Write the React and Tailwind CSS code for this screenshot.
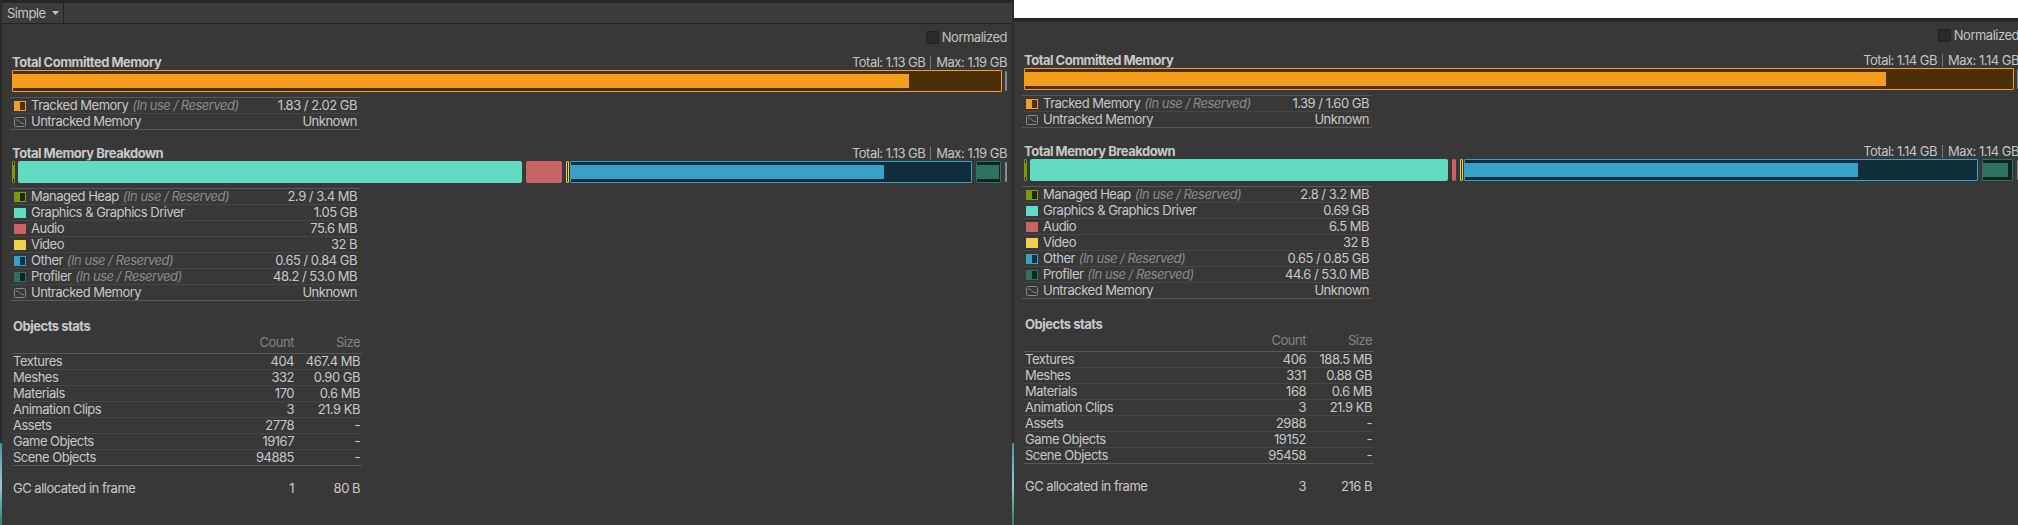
import React from 'react';

const LEFT = {
    total: '1.13 GB',
    max: '1.19 GB',
    trackedFill: 896,
    tracked: '1.83 / 2.02 GB',
    segments: [
        { kind: 'split', gap: 0, w: 3, fill: 1, color: '#7d9b06', dark: '#1e2600' },
        { kind: 'solid', gap: 3, w: 504, color: '#62dbc3' },
        { kind: 'solid', gap: 4, w: 36, color: '#c96464' },
        { kind: 'split', gap: 4, w: 3, fill: 0, color: '#f0d24a', dark: '#3a3110' },
        { kind: 'split', gap: 1, w: 402, fill: 313, color: '#37a1c8', dark: '#112f3b' },
        { kind: 'split', gap: 4, w: 25, fill: 22, color: '#2f7163', dark: '#0e2621' },
    ],
    breakdown: ['2.9 / 3.4 MB', '1.05 GB', '75.6 MB', '32 B', '0.65 / 0.84 GB', '48.2 / 53.0 MB', 'Unknown'],
    objects: [
        ['Textures', '404', '467.4 MB'],
        ['Meshes', '332', '0.90 GB'],
        ['Materials', '170', '0.6 MB'],
        ['Animation Clips', '3', '21.9 KB'],
        ['Assets', '2778', '-'],
        ['Game Objects', '19167', '-'],
        ['Scene Objects', '94885', '-'],
    ],
    gc: ['1', '80 B'],
};

const RIGHT = {
    total: '1.14 GB',
    max: '1.14 GB',
    trackedFill: 861,
    tracked: '1.39 / 1.60 GB',
    segments: [
        { kind: 'split', gap: 0, w: 3, fill: 1, color: '#7d9b06', dark: '#1e2600' },
        { kind: 'solid', gap: 3, w: 418, color: '#62dbc3' },
        { kind: 'solid', gap: 4, w: 4, color: '#c96464' },
        { kind: 'split', gap: 4, w: 3, fill: 0, color: '#f0d24a', dark: '#3a3110' },
        { kind: 'split', gap: 1, w: 514, fill: 393, color: '#37a1c8', dark: '#112f3b' },
        { kind: 'split', gap: 4, w: 31, fill: 25, color: '#2f7163', dark: '#0e2621' },
    ],
    breakdown: ['2.8 / 3.2 MB', '0.69 GB', '6.5 MB', '32 B', '0.65 / 0.85 GB', '44.6 / 53.0 MB', 'Unknown'],
    objects: [
        ['Textures', '406', '188.5 MB'],
        ['Meshes', '331', '0.88 GB'],
        ['Materials', '168', '0.6 MB'],
        ['Animation Clips', '3', '21.9 KB'],
        ['Assets', '2988', '-'],
        ['Game Objects', '19152', '-'],
        ['Scene Objects', '95458', '-'],
    ],
    gc: ['3', '216 B'],
};

const LEGEND = [
    { label: 'Managed Heap', reserved: true, swatch: 'split', color: '#7d9b06', dark: '#1e2600' },
    { label: 'Graphics & Graphics Driver', swatch: 'solid', color: '#62dbc3' },
    { label: 'Audio', swatch: 'solid', color: '#c96464' },
    { label: 'Video', swatch: 'solid', color: '#f0d24a' },
    { label: 'Other', reserved: true, swatch: 'split', color: '#37a1c8', dark: '#112f3b' },
    { label: 'Profiler', reserved: true, swatch: 'split', color: '#2f7163', dark: '#0e2621' },
    { label: 'Untracked Memory', swatch: 'untracked' },
];

const Swatch = ({ kind, color, dark }) => {
    if (kind === 'untracked') {
        return (
            <svg width="12" height="10" viewBox="0 0 12 10" className="flex-none">
                <rect x="0.5" y="0.5" width="11" height="9" rx="1" fill="none" stroke="#8a8a8a" />
                <path d="M2 3 C4 2.5 5 4 6 5 S8.5 7 10 6.5" fill="none" stroke="#8a8a8a" strokeWidth="1" />
            </svg>
        );
    }
    if (kind === 'solid') {
        return <div className="h-[10px] w-[12px] flex-none" style={{ backgroundColor: color }} />;
    }
    return (
        <div className="flex h-[10px] w-[12px] flex-none border" style={{ borderColor: color, backgroundColor: dark }}>
            <div className="h-full w-[5px]" style={{ backgroundColor: color }} />
        </div>
    );
};

const Reserved = () => (
    <span className="ml-[4px] italic text-[#8b8b8b]">(In use / Reserved)</span>
);

const TotalLine = ({ total, max }) => (
    <div className="flex items-center text-[#c4c4c4]">
        <span>Total: {total}</span>
        <span className="mx-[5px] h-[13px] w-px bg-[#7a7a7a]" />
        <span>Max: {max}</span>
    </div>
);

const Segment = ({ s }) => {
    if (s.kind === 'solid') {
        return (
            <div
                className="h-full flex-none rounded-[2px]"
                style={{ width: s.w, marginLeft: s.gap, backgroundColor: s.color }}
            />
        );
    }
    return (
        <div
            className="h-full flex-none rounded-[1px] border py-[3px]"
            style={{ width: s.w, marginLeft: s.gap, borderColor: s.color, backgroundColor: s.dark }}
        >
            <div className="h-full" style={{ width: s.fill, backgroundColor: s.color }} />
        </div>
    );
};

const MaxMarker = () => <div className="ml-auto h-[20px] w-[2px] self-center rounded-[1px] bg-[#8a8a8a]" />;

// rows get their 15px from the line height; the divider line adds the 16th
const LegendRow = ({ swatch, color, dark, label, reserved, value }) => (
    <div className="flex items-center pr-[3px]">
        <div className="ml-[4px] flex items-center">
            <Swatch kind={swatch} color={color} dark={dark} />
        </div>
        <span className="ml-[5px] text-[#c8c8c8]">{label}</span>
        {reserved && <Reserved />}
        <span className="ml-auto text-[#c8c8c8]">{value}</span>
    </div>
);

const StatRow = ({ name, count, size, muted }) => (
    <div className={`flex items-center pl-[1px] pr-[2px] ${muted ? 'text-[#858585]' : 'text-[#c8c8c8]'}`}>
        <span className="flex-1">{name}</span>
        <span className="w-[60px] text-right">{count}</span>
        <span className="w-[66px] text-right">{size}</span>
    </div>
);

const Panel = ({ d, clipped }) => (
    <div className="flex h-full w-[1010px] flex-none flex-col bg-[#383838]">
        {clipped ? (
            <div className="h-[4px] flex-none border-b border-[#2a2a2a] bg-[#262626]" />
        ) : (
            <div className="flex-none">
                <div className="h-[3px] bg-[#262626]" />
                <div className="flex h-[21px] border-b border-[#232323] bg-[#3c3c3c]">
                    <div className="flex w-[62px] items-center border-r border-[#232323] pl-[5px] text-[#c4c4c4]">
                        <span>Simple</span>
                        <svg width="7" height="4" viewBox="0 0 7 4" className="ml-[6px]">
                            <path d="M0 0 H7 L3.5 4 Z" fill="#c4c4c4" />
                        </svg>
                    </div>
                </div>
            </div>
        )}

        <div className="flex flex-col pl-[10px] pr-[5px]">
            {/* Normalized toggle */}
            <div className="mt-[6px] flex h-[14px] items-center justify-end">
                <div className="h-[13px] w-[13px] rounded-[2px] border border-[#212121] bg-[#2a2a2a]" />
                <span className="ml-[3px] text-[#c4c4c4]">Normalized</span>
            </div>

            {/* Total Committed Memory */}
            <div className="mt-[11px] flex h-[14px] items-center justify-between">
                <span className="font-bold text-[#c8c8c8]">Total Committed Memory</span>
                <TotalLine total={d.total} max={d.max} />
            </div>
            <div className="mt-[1px] flex h-[22px]">
                <div className="h-full w-[990px] flex-none rounded-[1px] border border-[#f49e1e] bg-[#4a2e08] py-[3px]">
                    <div className="h-full bg-[#f49e1e]" style={{ width: d.trackedFill }} />
                </div>
                <MaxMarker />
            </div>
            <div className="-ml-[2px] mt-[5px] w-[350px] divide-y divide-[#464646] border-y border-[#585858]">
                <LegendRow swatch="split" color="#f49e1e" dark="#4a2e08" label="Tracked Memory" reserved value={d.tracked} />
                <LegendRow swatch="untracked" label="Untracked Memory" value="Unknown" />
            </div>

            {/* Total Memory Breakdown */}
            <div className="mt-[16px] flex h-[14px] items-center justify-between">
                <span className="font-bold text-[#c8c8c8]">Total Memory Breakdown</span>
                <TotalLine total={d.total} max={d.max} />
            </div>
            <div className="mt-[1px] flex h-[22px]">
                <div className="flex h-full w-[990px] flex-none">
                    {d.segments.map((s, i) => (
                        <Segment key={i} s={s} />
                    ))}
                </div>
                <MaxMarker />
            </div>
            <div className="-ml-[2px] mt-[5px] w-[350px] divide-y divide-[#464646] border-y border-[#585858]">
                {LEGEND.map((l, i) => (
                    <LegendRow key={l.label} {...l} value={d.breakdown[i]} />
                ))}
            </div>

            {/* Objects stats */}
            <div className="ml-[1px] mt-[18px] flex h-[14px] items-center font-bold text-[#c8c8c8]">Objects stats</div>
            <div className="mt-[2px] w-[350px]">
                <StatRow name="" count="Count" size="Size" muted />
            </div>
            <div className="mt-[3px] w-[350px] divide-y divide-[#464646] border-y border-[#585858]">
                {d.objects.map(([name, count, size]) => (
                    <StatRow key={name} name={name} count={count} size={size} />
                ))}
            </div>
            <div className="mt-[15px] w-[350px]">
                <StatRow name="GC allocated in frame" count={d.gc[0]} size={d.gc[1]} />
            </div>
        </div>
    </div>
);

const EdgeStrip = () => (
    <div className="flex h-full w-[2px] flex-none flex-col bg-[#2b2b2b]">
        <div className="flex-1" />
        <div className="h-[82px] bg-gradient-to-b from-[#4a8fa8] via-[#9fc6d6] to-[#2f7f70]" />
    </div>
);

export default function App() {
    return (
        <div className="flex h-[525px] w-[2018px] overflow-hidden bg-[#383838] font-['Inter',sans-serif] text-[13px] leading-[15px] tracking-[-0.5px]">
            <EdgeStrip />
            <Panel d={LEFT} />
            <EdgeStrip />
            <div className="flex h-full flex-none flex-col">
                <div className="h-[18px] flex-none bg-white" />
                <div className="min-h-0 flex-1">
                    <Panel d={RIGHT} clipped />
                </div>
            </div>
        </div>
    );
}
